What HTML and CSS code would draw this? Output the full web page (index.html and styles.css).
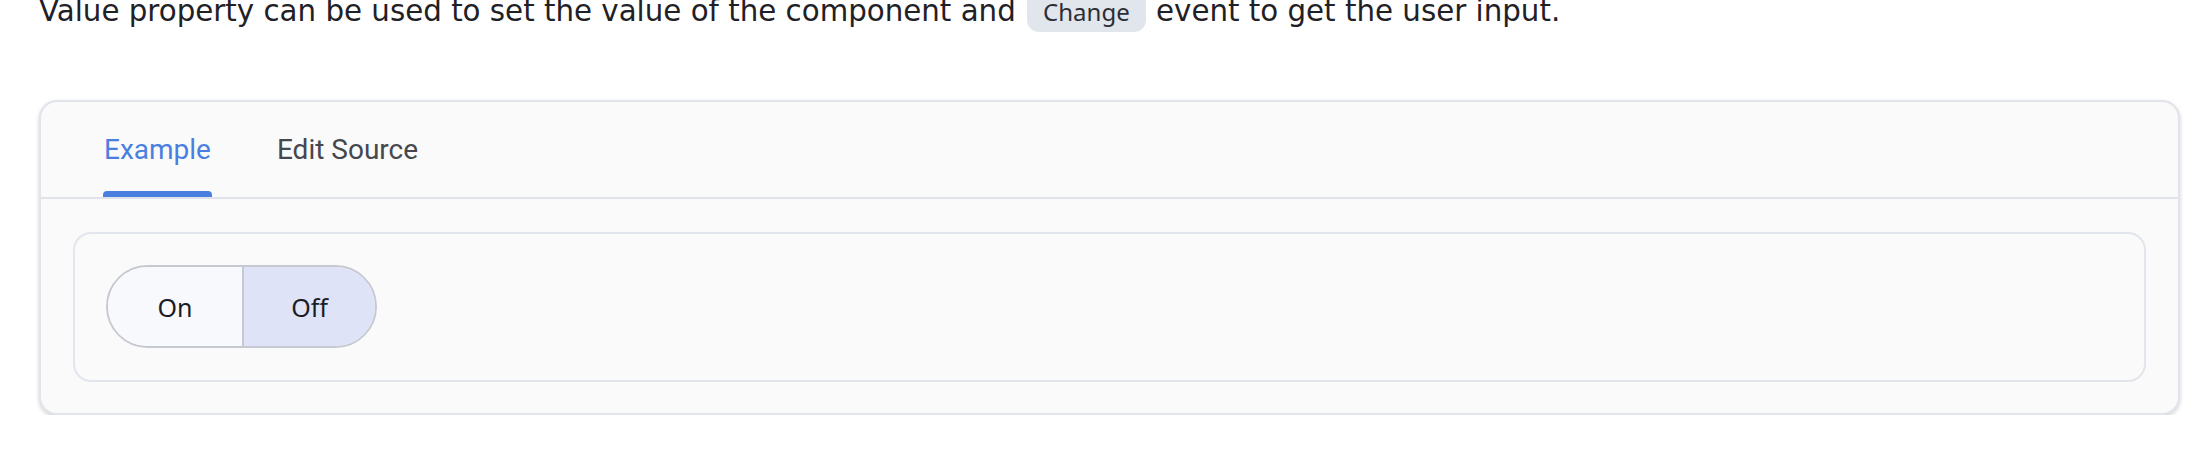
FILE: index.html
```html
<!DOCTYPE html>
<html lang="en">
<head>
    <meta charset="UTF-8">
    <meta name="viewport" content="width=device-width, initial-scale=1.0">
    <title>Toggle Value</title>
    <link rel="stylesheet" href="styles.css">
</head>
<body>
    <p class="lead">Value property can be used to set the value of the component and <code>Change</code> event to get the user input.</p>

    <div class="card">
        <div class="tabs">
            <div class="tab active">Example</div>
            <div class="tab">Edit Source</div>
        </div>
        <div class="card-body">
            <div class="demo">
                <div class="toggle">
                    <button class="seg">On</button>
                    <button class="seg selected">Off</button>
                </div>
            </div>
        </div>
    </div>
</body>
</html>
```

FILE: styles.css
```css
body {
    margin: 0;
    padding: 0 14px 0 39px;
    background: #ffffff;
    font-family: Roboto, "Noto Sans", sans-serif;
    color: #1f2126;
}
.lead {
    margin: -5px 0 0 0;
    font-family: "DejaVu Sans", sans-serif;
    font-size: 29.3px;
    line-height: 32px;
    white-space: nowrap;
}
.lead code {
    font-family: "Noto Sans", sans-serif;
    font-size: 24px;
    color: #2b2e35;
    background: #e1e5ec;
    border-radius: 12px;
    padding: 4px 16px 4px;
    margin: 0 1px 0 2px;
}
.card {
    margin-top: 72px;
    background: #fafafa;
    border: 2px solid #e1e4ea;
    border-radius: 18px;
    box-shadow: 0 2px 4px rgba(0, 0, 0, 0.18);
}
.tabs {
    display: flex;
    align-items: flex-end;
    gap: 66px;
    height: 95px;
    padding-left: 63px;
    border-bottom: 2px solid #e0e3ea;
}
.tab {
    position: relative;
    font-size: 28px;
    line-height: 32px;
    padding-bottom: 31px;
    color: #45474d;
}
.tab.active {
    color: #4a7fe0;
}
.tab.active::after {
    content: "";
    position: absolute;
    left: -1px;
    right: -1px;
    bottom: 0;
    height: 6px;
    background: #4a7fe0;
    border-radius: 4px 4px 0 0;
}
.card-body {
    padding: 33px 32px 31px;
}
.demo {
    border: 2px solid #e2e5ec;
    border-radius: 18px;
    padding: 31px 31px 32px;
}
.toggle {
    display: inline-flex;
    height: 83px;
    border: 2px solid #c6c9d1;
    border-radius: 42px;
    overflow: hidden;
    box-sizing: border-box;
}
.seg {
    width: 134px;
    border: none;
    background: #f8f9fc;
    font-family: "Noto Sans", sans-serif;
    font-size: 25px;
    color: #1a1d24;
    padding: 0;
    cursor: pointer;
}
.seg + .seg {
    border-left: 2px solid #c6c9d1;
}
.seg.selected {
    width: 133px;
    background: #dee3f8;
}
```
